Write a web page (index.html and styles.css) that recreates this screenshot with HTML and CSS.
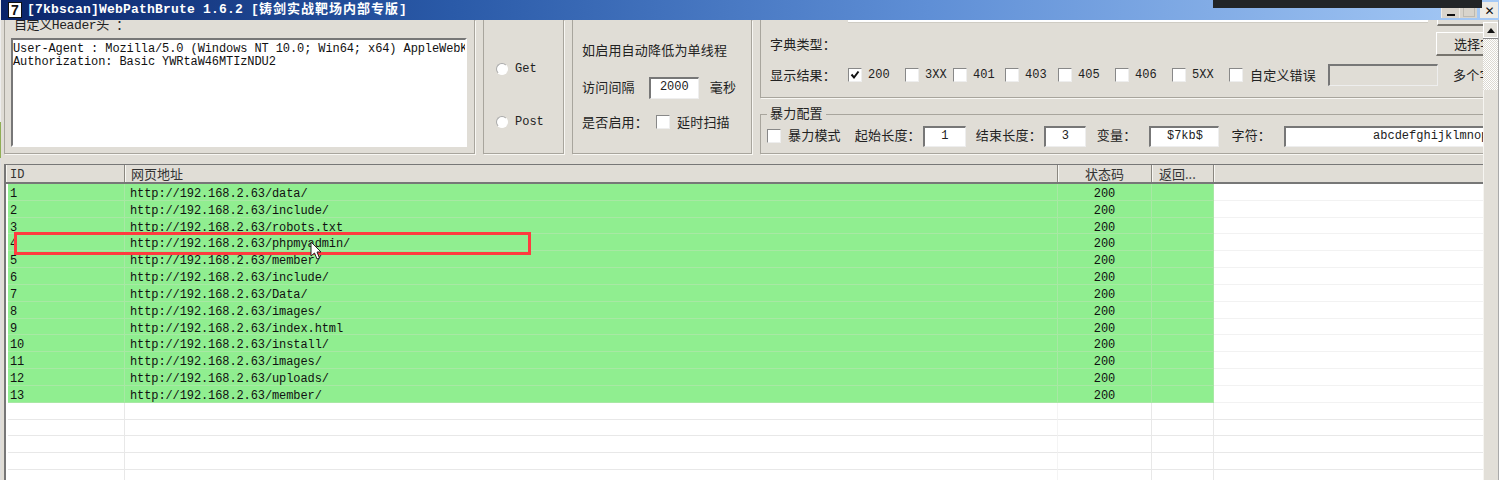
FILE: index.html
```html
<!DOCTYPE html>
<html lang="zh">
<head>
<meta charset="utf-8">
<title>WebPathBrute</title>
<link rel="stylesheet" href="styles.css">
</head>
<body>
<div class="edge"></div>
<div class="window">
  <header class="titlebar">
    <span class="appicon">7</span>
    <span class="title">[7kbscan]WebPathBrute 1.6.2 [<span class="title-cjk">铸剑实战靶场内部专版</span>]</span>
    <span class="winbtns">
      <span class="winbtn"><i class="min"></i></span>
      <span class="winbtn"><i class="max"></i></span>
      <span class="winbtn close">✕</span>
    </span>
  </header>
  <div class="darkbar"></div>
  <div class="content">
    <main class="main">
      <section class="panels">
        <div class="group g-header">
          <div class="hdr-label">自定义Header头 ：</div>
          <div class="textarea">User-Agent : Mozilla/5.0 (Windows NT 10.0; Win64; x64) AppleWebKit/537.36<br>Authorization: Basic YWRtaW46MTIzNDU2</div>
        </div>
        <div class="group g-method">
          <label class="radio-row"><span class="radio"></span><span class="mono">Get</span></label>
          <label class="radio-row"><span class="radio"></span><span class="mono">Post</span></label>
        </div>
        <div class="group g-delay">
          <div class="label note">如启用自动降低为单线程</div>
          <div class="row interval"><span class="label">访问间隔</span><span class="input i-interval">2000</span><span class="label">毫秒</span></div>
          <div class="row"><span class="label">是否启用：</span><span class="check"></span><span class="label">延时扫描</span></div>
        </div>
        <div class="g-right">
          <div class="group g-dict">
            <span class="rem-input"></span>
            <span class="rem-btn"></span>
            <div class="label dict-label">字典类型：</div>
            <div class="row results">
              <span class="label first">显示结果：</span>
              <span class="check on"><svg viewBox="0 0 12 12"><path d="M2.5 5.5 5 8.5 9.5 2.5" fill="none" stroke="#111" stroke-width="2"/></svg></span><span class="mono code">200</span>
              <span class="check"></span><span class="mono code c-3xx">3XX</span>
              <span class="check"></span><span class="mono code c-401">401</span>
              <span class="check"></span><span class="mono code c-403">403</span>
              <span class="check"></span><span class="mono code">405</span>
              <span class="check"></span><span class="mono code">406</span>
              <span class="check"></span><span class="mono code">5XX</span>
              <span class="check"></span><span class="label custom">自定义错误</span>
              <span class="input i-error"></span>
              <span class="label multi">多个字</span>
            </div>
            <button class="pick">选择字</button>
          </div>
          <div class="group g-brute">
            <span class="legend">暴力配置</span>
            <div class="row brute">
              <span class="check"></span><span class="label b-mode">暴力模式</span>
              <span class="label b-start">起始长度：</span><span class="input i-len">1</span>
              <span class="label b-end">结束长度：</span><span class="input i-len i-len2">3</span>
              <span class="label b-var">变量：</span><span class="input i-var">$7kb$</span>
              <span class="label b-char">字符：</span><span class="input i-chars">abcdefghijklmnop</span>
            </div>
          </div>
        </div>
      </section>
      <section class="table">
        <div class="thead">
          <span class="th c-id">ID</span>
          <span class="th c-url">网页地址</span>
          <span class="th c-status">状态码</span>
          <span class="th c-ret">返回...</span>
          <span class="th c-rest"></span>
        </div>
        <div class="tbody" id="tbody"></div>
        <div class="hilite"></div>
        <svg class="cursor" viewBox="0 0 12 20"><path d="M1 1V15L4.5 12 7 18 9.5 17 7 11H11Z" fill="#fff" stroke="#222" stroke-width="1"/></svg>
      </section>
    </main>
    <aside class="scrollbar">
      <span class="sb-btn"><i></i></span>
      <span class="sb-track"></span>
      <span class="sb-thumb"></span>
    </aside>
  </div>
</div>
<script>
var paths=["data/","include/","robots.txt","phpmyadmin/","member/","include/","Data/","images/","index.html","install/","images/","uploads/","member/"];
var html="";
for(var i=0;i<18;i++){
  if(i<13){html+='<div class="tr on"><span class="td c-id">'+(i+1)+'</span><span class="td c-url">http://192.168.2.63/'+paths[i]+'</span><span class="td c-status">200</span><span class="td c-ret"></span><span class="td c-rest"></span></div>';}
  else{html+='<div class="tr"><span class="td c-id"></span><span class="td c-url"></span><span class="td c-status"></span><span class="td c-ret"></span><span class="td c-rest"></span></div>';}
}
document.getElementById("tbody").innerHTML=html;
</script>
</body>
</html>
```

FILE: styles.css
```css
* { box-sizing: border-box; }
html, body { margin: 0; height: 480px; overflow: hidden; background: #fff; }
body { display: flex; font: 13px "Noto Sans CJK SC", "Liberation Sans", sans-serif; color: #222; }
.edge { width: 1px; background: linear-gradient(#eee 0 122px, #8fae55 122px 158px, #ddd 158px); }
.window { flex: 1; min-width: 0; display: flex; flex-direction: column; position: relative; background: #e0ddd6; }
.titlebar { height: 20px; display: flex; align-items: center; padding: 0 1px 0 7px; background: linear-gradient(90deg, #0a246a 0%, #2a5aa8 30%, #5f8fd6 62%, #a6caf6 100%); color: #fff; flex: none; position: relative; z-index: 1; }
.appicon { width: 14px; height: 16px; background: #fff; color: #111; border: 1px solid #111; font: bold 14px/14px "Liberation Sans", sans-serif; text-align: center; }
.title { margin-left: 5px; font: bold 13px/16px "Liberation Mono", "Noto Sans CJK SC", monospace; letter-spacing: .2px; white-space: nowrap; }
.title-cjk { letter-spacing: 1px; }
.winbtns { margin-left: auto; display: flex; align-self: flex-end; height: 16px; margin-bottom: 2px; }
.winbtn { width: 18px; background: #d8d4cc; display: flex; align-items: flex-end; justify-content: center; border-left: 1px solid #eeece6; }
.winbtn .min { width: 8px; height: 2px; background: #111; margin-bottom: 2px; }
.winbtn .max { width: 12px; height: 10px; border: 1px solid #bdbab2; margin-bottom: 1px; }
.winbtn.close { margin-left: 3px; color: #111; background: #eeece6; font: bold 12px/13px "DejaVu Sans", sans-serif; }
.darkbar { position: absolute; left: 1212px; top: 0; width: 269px; height: 8px; background: #222527; z-index: 2; }
.content { flex: 1; min-height: 0; display: flex; }
.main { flex: 1; min-width: 0; display: flex; flex-direction: column; overflow: hidden; padding-left: 3px; }
.scrollbar { width: 16px; flex: none; background: #e0ddd6; display: flex; flex-direction: column; border-right: 1px solid #aaa; }
.sb-btn { height: 16px; margin-top: 2px; background: #e4e1da; display: flex; align-items: center; justify-content: center; border: 1px solid #fff; }
.sb-btn i { border: 4px solid transparent; border-top: 0; border-bottom: 5px solid #111; }
.sb-track { height: 52px; background: repeating-conic-gradient(#fff 0 25%, #dcd9d2 0 50%) 0 0 / 2px 2px; border-top: 1px solid #888; }
.sb-thumb { flex: 1; background: #e2dfd8; border-left: 1px solid #f6f5f1; }
.panels { height: 134px; display: flex; gap: 8px; flex: none; }
.group { border: 1px solid #a8a59d; border-top: 0; box-shadow: 1px 1px 0 #f8f7f3; }
.label { white-space: nowrap; color: #222; letter-spacing: .2px; line-height: 18px; }
.mono { font: 12px "Liberation Mono", monospace; color: #222; }
.g-header { width: 471px; padding: 0 0 0 6px; }
.hdr-label { margin-top: -1px; font: 13px/14px "Liberation Mono", "Noto Sans CJK SC", monospace; color: #222; white-space: nowrap; letter-spacing: -.4px; padding-left: 3px; }
.textarea { margin-top: 5px; width: 456px; height: 109px; background: #fff; border: 2px solid #777; border-right-color: #fff; border-bottom-color: #fff; padding: 3px 0 0; font: 12px/13px "Liberation Mono", monospace; letter-spacing: -.1px; color: #111; white-space: nowrap; overflow: hidden; }
.g-method { width: 81px; padding: 40px 0 0 12px; display: flex; flex-direction: column; gap: 36px; }
.radio-row { display: flex; align-items: center; gap: 7px; height: 17px; }
.radio { width: 12px; height: 12px; border-radius: 50%; background: #fff; border: 1px solid #aaa; border-right-color: #fff; border-bottom-color: #fff; }
.g-delay { width: 180px; padding: 21px 0 0 9px; display: flex; flex-direction: column; gap: 14px; }
.note { margin-bottom: 4px; }
.row { display: flex; align-items: center; }
.interval .label { margin-bottom: 2px; }
.input { display: block; background: #fff; border: 1px solid #777; border-right-color: #eee; border-bottom-color: #eee; border-width: 2px 1px 1px 2px; font: 12px/17px "Liberation Mono", monospace; text-align: center; color: #222; }
.i-interval { width: 50px; height: 22px; margin: 0 11px 0 14px; }
.check { width: 14px; height: 14px; flex: none; background: #fff; border: 1px solid #888; border-right-color: #eee; border-bottom-color: #eee; display: inline-flex; align-items: center; justify-content: center; }
.check svg { width: 12px; height: 12px; }
.g-delay .check { margin-right: 7px; margin-left: 8px; }
.g-right { flex: 1; min-width: 0; margin-right: -2px; display: flex; flex-direction: column; gap: 16px; }
.g-dict { height: 78px; position: relative; padding: 15px 0 0 9px; }
.rem-input { position: absolute; left: 87px; top: 0; width: 580px; height: 3px; background: #fff; border-bottom: 1px solid #cfccc4; }
.rem-btn { position: absolute; right: 0; top: 0; width: 47px; height: 6px; border-left: 1px solid #fff; border-bottom: 2px solid #77746e; }
.dict-label { margin-bottom: 11px; }
.results .check { margin-right: 6px; }
.results .first { margin-right: 12px; }
.code { width: 37px; flex: none; }
.c-3xx { width: 28px; }
.c-401 { width: 32px; }
.c-403 { width: 33px; }
.results .custom { margin-left: 1px; }
.i-error { width: 110px; height: 22px; margin-left: 12px; background: #e0ddd6; flex: none; }
.multi { margin-left: 15px; }
.pick { position: absolute; right: -2px; top: 12px; width: 50px; height: 24px; padding: 0 0 0 17px; background: #e0ddd6; border: 1px solid #fff; border-bottom: 2px solid #77746e; border-right: 0; font: 13px "Noto Sans CJK SC", sans-serif; color: #222; text-align: left; white-space: nowrap; overflow: hidden; }
.g-brute { height: 40px; position: relative; border-top: 1px solid #a8a59d; padding: 11px 0 0 6px; }
.legend { position: absolute; left: 6px; top: -11px; padding: 0 3px; background: #e0ddd6; line-height: 18px; letter-spacing: .2px; }
.brute { height: 21px; }
.brute .label { margin-bottom: 3px; }
.brute .check { margin-bottom: 2px; }
.b-mode { margin-left: 7px; }
.b-start { margin-left: 14px; }
.b-end { margin-left: 10px; }
.b-var { margin-left: 11px; }
.b-char { margin-left: 12px; }
.i-len { width: 43px; height: 21px; flex: none; margin-left: 2px; }
.i-len2 { width: 42px; }
.i-var { width: 70px; height: 21px; flex: none; margin-left: 13px; }
.i-chars { width: 200px; height: 21px; flex: none; margin-left: 13px; text-align: left; padding-left: 87px; white-space: nowrap; overflow: hidden; }
.table { position: relative; flex: 1; min-height: 0; margin-top: 10px; background: #fff; border: 1px solid #777; border-right: 0; border-bottom: 0; border-left-width: 2px; overflow: hidden; }
.thead { display: flex; height: 19px; background: #e0ddd6; border-bottom: 2px solid #777; }
.th { display: block; font-size: 13px; line-height: 17px; padding-left: 6px; color: #333; border-right: 1px solid #8a8780; box-shadow: inset 1px 0 0 #f8f7f3; white-space: nowrap; }
.th.c-id { font: 12px/20px "Liberation Mono", monospace; padding-left: 4px; }
.th.c-status { text-align: center; padding-left: 0; }
.th.c-ret { padding-left: 7px; }
.th.c-rest { border-right: 0; }
.tbody { display: flex; flex-direction: column; }
.tr { display: flex; height: 16.83px; flex: none; }
.td { display: block; font: 12px/20px "Liberation Mono", monospace; letter-spacing: -.1px; color: #111; border-bottom: 1px solid #e8e8e8; border-right: 1px solid #e8e8e8; white-space: nowrap; padding-left: 5px; overflow: hidden; }
.tr .td.c-id { margin-left: 2px; padding-left: 2px; width: 117px; }
.thead .c-id { width: 119px; }
.c-url { width: 933px; }
.c-status { width: 94px; }
.td.c-status { text-align: center; padding-left: 0; }
.c-ret { width: 62px; }
.c-rest { flex: 1; }
.tr.on .td { background: #90ee90; border-color: #a8e8a4; }
.tr.on .td.c-rest { background: #fff; border-color: #f2f2f2; border-right: 0; }
.tr .td.c-rest { border-right: 0; }
.tr:not(.on) .td.c-url { border-right-color: #f4f4f4; }
.hilite { position: absolute; left: 8px; top: 67px; width: 517px; height: 23px; border: 3px solid #ff3b3f; }
.cursor { position: absolute; left: 304px; top: 76px; width: 12px; height: 20px; }
```
